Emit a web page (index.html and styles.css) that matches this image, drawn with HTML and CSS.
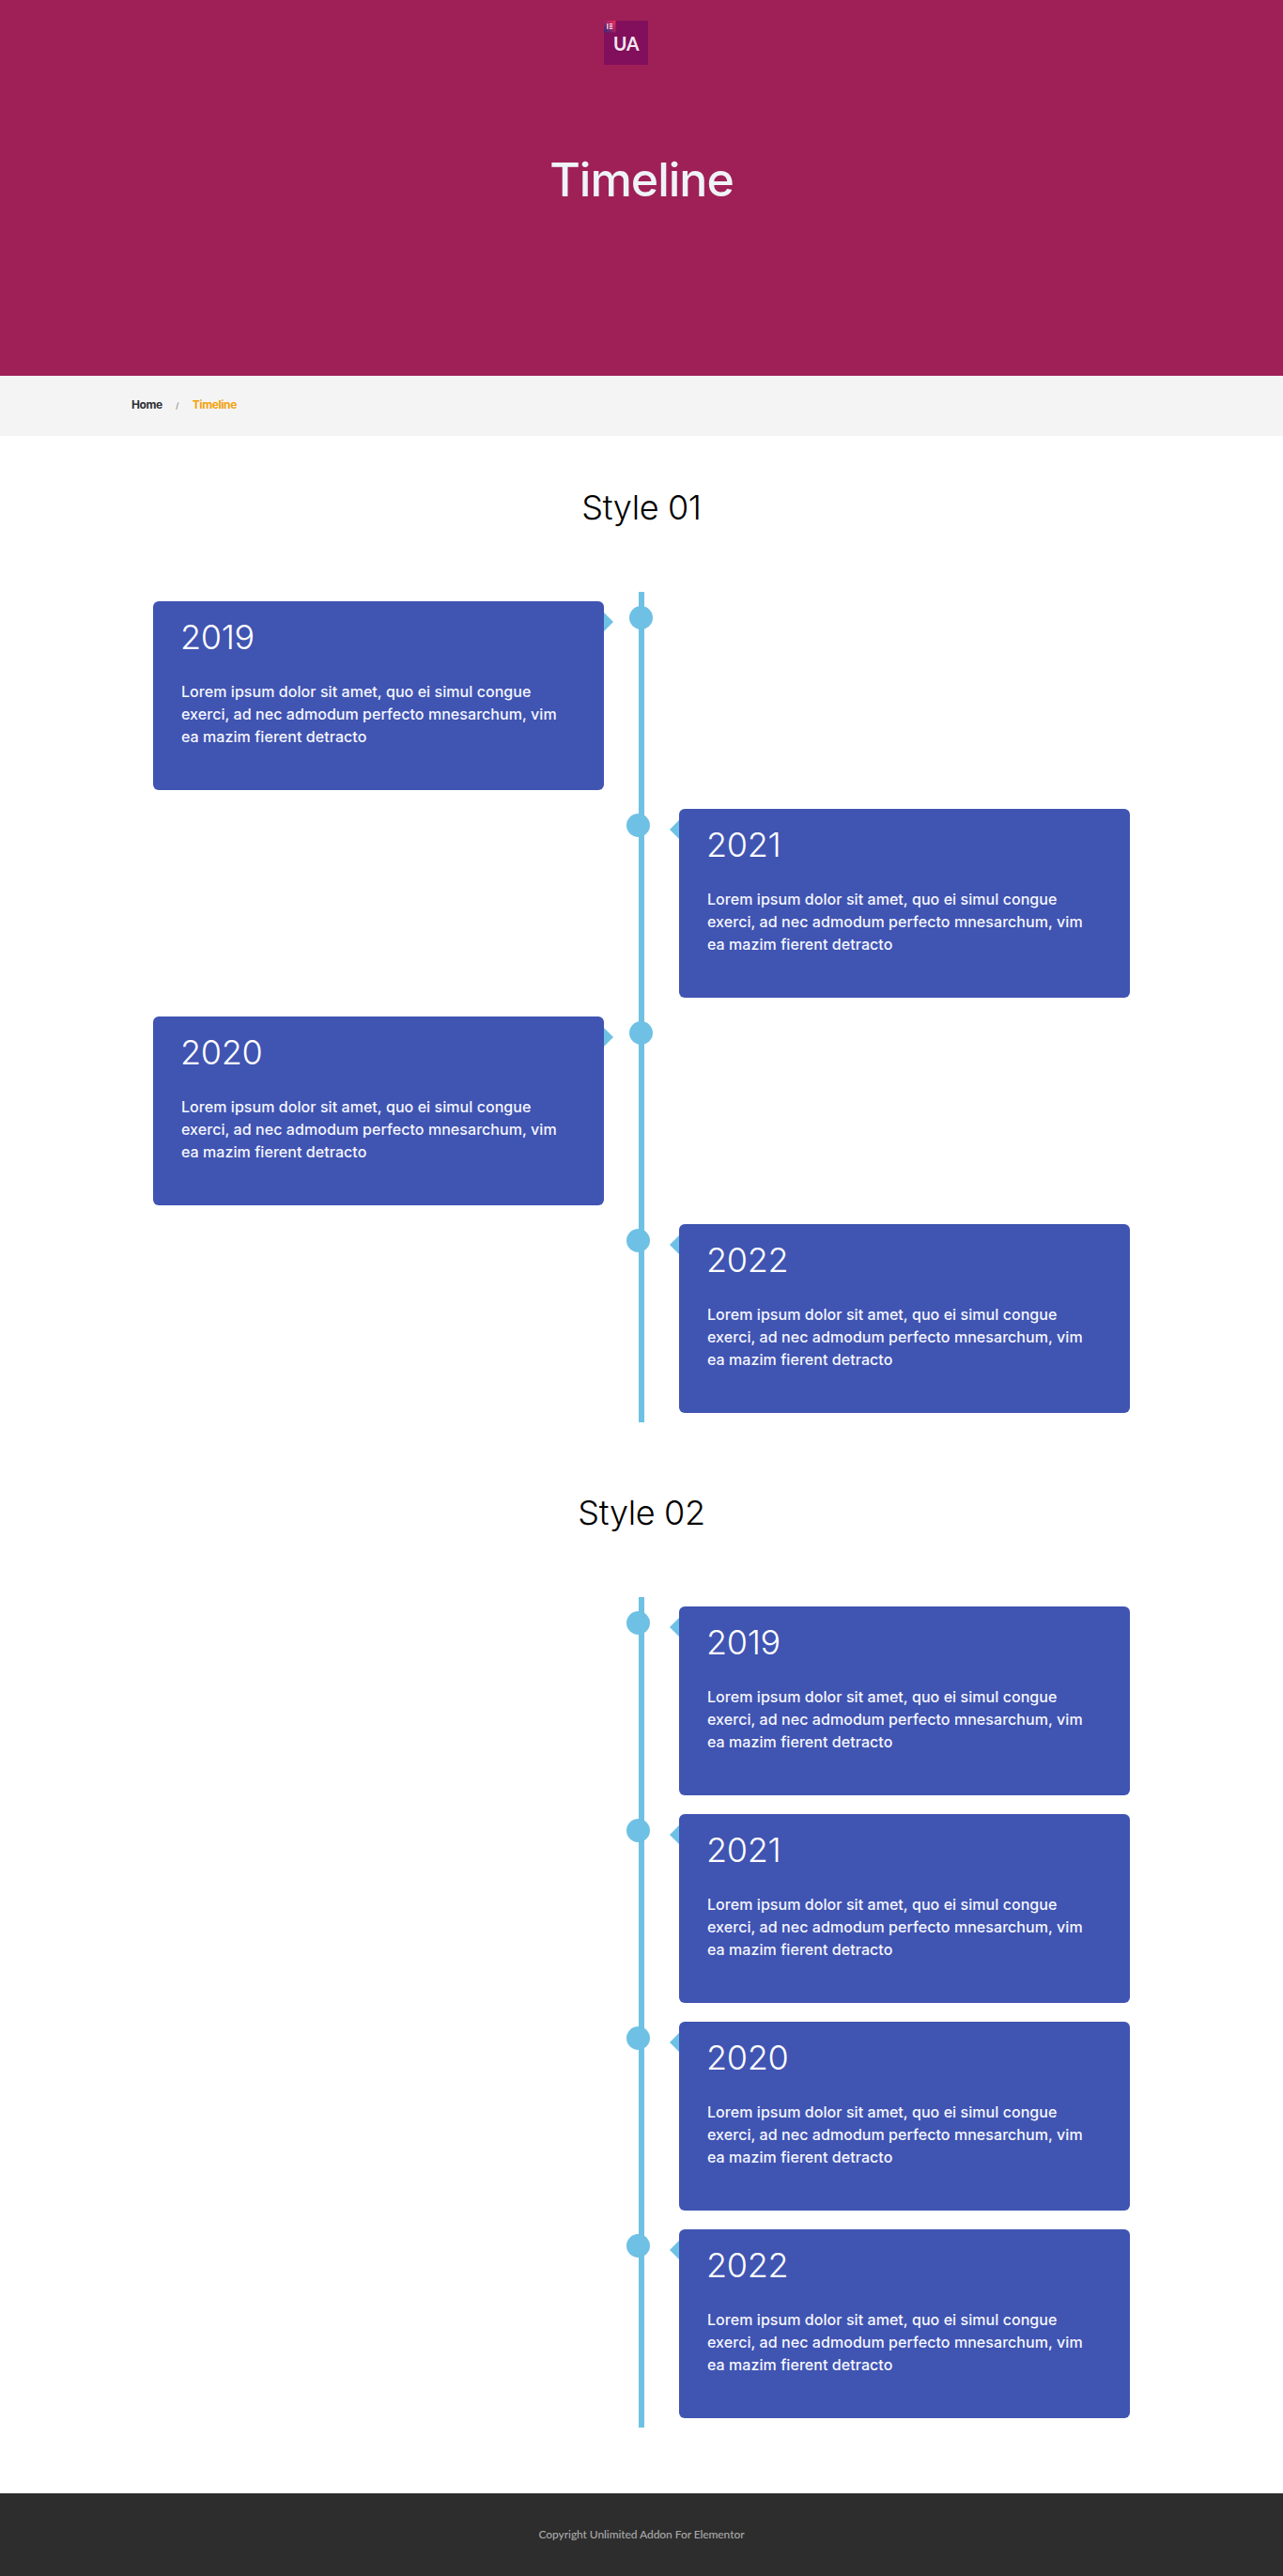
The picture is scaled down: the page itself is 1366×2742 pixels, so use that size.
FILE: index.html
```html
<!DOCTYPE html>
<html lang="en">
<head>
<meta charset="utf-8">
<title>Timeline</title>
<link rel="stylesheet" href="styles.css">
</head>
<body>
<header class="hero">
  <a class="logo" aria-label="Unlimited Addon">
    <svg width="47" height="47" viewBox="0 0 47 47">
      <defs>
        <linearGradient id="badge" x1="0" y1="1" x2="1" y2="0">
          <stop offset="0" stop-color="#312b83"/>
          <stop offset=".55" stop-color="#a52462"/>
          <stop offset="1" stop-color="#f02e59"/>
        </linearGradient>
      </defs>
      <rect width="47" height="47" fill="#820f5b"/>
      <rect width="12.5" height="12.5" fill="url(#badge)"/>
      <path d="M3.8 3v6M5.8 3.6h3.4M5.8 6h3.4M5.8 8.4h3.4" stroke="#eed7e5" stroke-width="1.3" fill="none"/>
      <text class="logo-text" x="10" y="32" textLength="27.5" lengthAdjust="spacingAndGlyphs">UA</text>
    </svg>
  </a>
  <h1 class="hero-title">Timeline</h1>
</header>
<nav class="breadcrumb">
  <a class="crumb">Home</a>
  <span class="crumb-divider">/</span>
  <span class="crumb crumb-current">Timeline</span>
</nav>
<main>
  <section class="style-block style-one">
    <h2 class="style-title">Style 01</h2>
    <div class="timeline">
      <article class="item item-left"><div class="card"><h3 class="year">2019</h3><p class="text">Lorem ipsum dolor sit amet, quo ei simul congue exerci, ad nec admodum perfecto mnesarchum, vim ea mazim fierent detracto</p></div></article>
      <article class="item"><div class="card"><h3 class="year">2021</h3><p class="text">Lorem ipsum dolor sit amet, quo ei simul congue exerci, ad nec admodum perfecto mnesarchum, vim ea mazim fierent detracto</p></div></article>
      <article class="item item-left"><div class="card"><h3 class="year">2020</h3><p class="text">Lorem ipsum dolor sit amet, quo ei simul congue exerci, ad nec admodum perfecto mnesarchum, vim ea mazim fierent detracto</p></div></article>
      <article class="item"><div class="card"><h3 class="year">2022</h3><p class="text">Lorem ipsum dolor sit amet, quo ei simul congue exerci, ad nec admodum perfecto mnesarchum, vim ea mazim fierent detracto</p></div></article>
    </div>
  </section>
  <section class="style-block style-two">
    <h2 class="style-title">Style 02</h2>
    <div class="timeline">
      <article class="item"><div class="card"><h3 class="year">2019</h3><p class="text">Lorem ipsum dolor sit amet, quo ei simul congue exerci, ad nec admodum perfecto mnesarchum, vim ea mazim fierent detracto</p></div></article>
      <article class="item"><div class="card"><h3 class="year">2021</h3><p class="text">Lorem ipsum dolor sit amet, quo ei simul congue exerci, ad nec admodum perfecto mnesarchum, vim ea mazim fierent detracto</p></div></article>
      <article class="item"><div class="card"><h3 class="year">2020</h3><p class="text">Lorem ipsum dolor sit amet, quo ei simul congue exerci, ad nec admodum perfecto mnesarchum, vim ea mazim fierent detracto</p></div></article>
      <article class="item"><div class="card"><h3 class="year">2022</h3><p class="text">Lorem ipsum dolor sit amet, quo ei simul congue exerci, ad nec admodum perfecto mnesarchum, vim ea mazim fierent detracto</p></div></article>
    </div>
  </section>
</main>
<footer class="footer">Copyright Unlimited Addon For Elementor</footer>
</body>
</html>
```
FILE: styles.css
```css
* { box-sizing: border-box; }

body {
  margin: 0;
  background: #fff;
  font-family: Inter, "Open Sans", sans-serif;
}

h1, h2, h3, p { margin: 0; }

.hero {
  height: 400px;
  padding-top: 22px;
  display: flex;
  flex-direction: column;
  align-items: center;
  background: #9f2057;
}

.logo { height: 47px; margin-right: 33px; }
.logo svg { display: block; }
.logo-text { font: 700 20.5px Lato, sans-serif; fill: #f3e9f0; }

.hero-title {
  margin-top: 92px;
  font-size: 50px;
  font-weight: 550;
  line-height: 60px;
  letter-spacing: -1px;
  color: #eff3f8;
}

.breadcrumb {
  height: 64px;
  padding: 0 140px 3px;
  display: flex;
  align-items: center;
  background: #f4f4f4;
  font-size: 12px;
}

.crumb { font-weight: 700; letter-spacing: -.42px; color: #2d3136; }
.crumb-current { color: #f2a20c; }
.crumb-divider { width: 32px; padding-top: 2px; text-align: center; font-size: 9px; font-weight: 600; color: #999; }

.style-title {
  text-align: center;
  font-size: 36px;
  font-weight: 330;
  line-height: 36px;
  letter-spacing: -.35px;
  color: #000;
}

.style-one { padding-top: 58px; }
.style-one .style-title { margin-bottom: 72px; }
.style-two { padding: 78px 0 70px; }
.style-two .style-title { margin-bottom: 72px; }

.timeline {
  width: 1120px;
  margin: 0 auto;
  display: grid;
  background: linear-gradient(#6ec1e4, #6ec1e4) 557px 0 / 6px 100% no-repeat;
}

.item {
  position: relative;
  width: 560px;
  height: 221px;
  padding: 10px 40px;
  justify-self: end;
}
.item-left { justify-self: start; }

/* marker on the centre line */
.item::before {
  content: "";
  position: absolute;
  top: 15px;
  left: -16px;
  width: 25px;
  height: 25px;
  border-radius: 50%;
  background: #6ec1e4;
}
.item-left::before { left: auto; right: -12px; }

/* pointer from the card to the line */
.item::after {
  content: "";
  position: absolute;
  top: 22px;
  left: 30px;
  border: solid transparent;
  border-width: 10px 10px 10px 0;
  border-right-color: #6ec1e4;
}
.item-left::after {
  left: auto;
  right: 30px;
  border-width: 10px 0 10px 10px;
  border-left-color: #6ec1e4;
}

.card {
  height: 201px;
  padding: 20px 30px;
  border-radius: 6px;
  background: #4054b2;
  color: #fff;
}

.year { margin: 0 0 28px -1px; font-size: 36px; font-weight: 350; line-height: 36px; letter-spacing: -.3px; }
.text { font-size: 16px; font-weight: 500; line-height: 24px; letter-spacing: .06px; color: #f5f7ff; }

.footer {
  height: 88px;
  padding-bottom: 2px;
  display: flex;
  align-items: center;
  justify-content: center;
  background: #2d2d2d;
  color: #a8a8a8;
  font: 500 12px Lato, sans-serif;
  letter-spacing: -.08px;
}
```
